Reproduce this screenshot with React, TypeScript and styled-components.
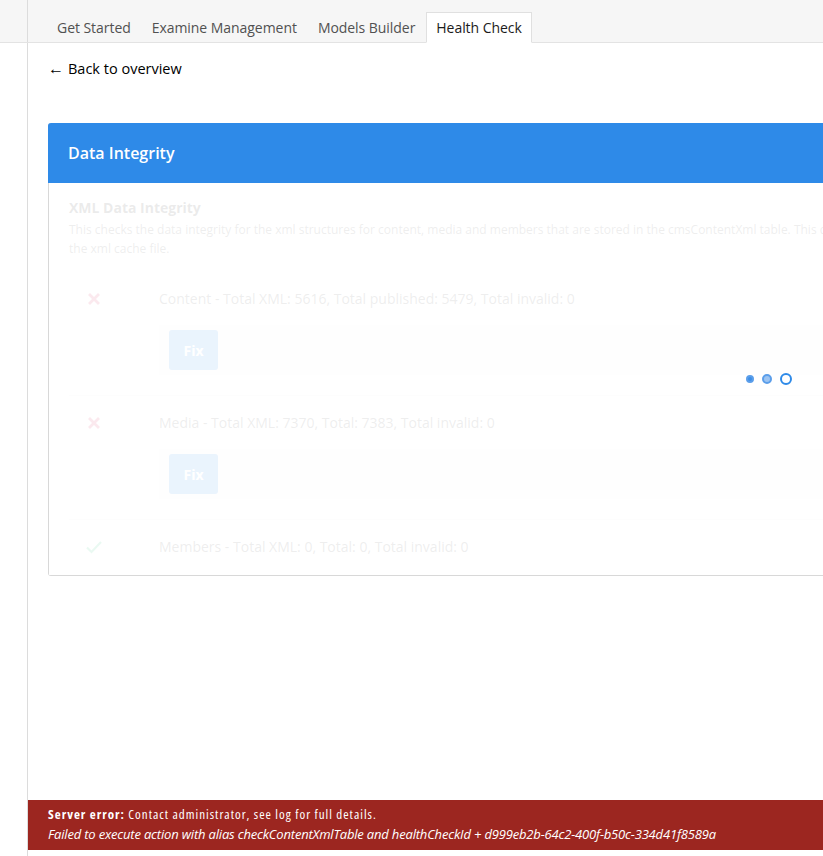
import styled, { createGlobalStyle } from "styled-components";

const GlobalStyle = createGlobalStyle`
    html, body {
        margin: 0;
        padding: 0;
        overflow: hidden;
        background: #fff;
        font-family: "Open Sans", "Noto Sans", sans-serif;
        color: #1b1b1b;
    }
`

const Page = styled.div`
    display: flex;
    flex-direction: column;
    height: 100vh;
    width: 100vw;
`

const Header = styled.div`
    display: flex;
    height: 43px;
    flex-shrink: 0;
    background: #f6f6f6;
    border-bottom: 1px solid #e3e3e3;
    box-sizing: border-box;
`

const SideStrip = styled.div`
    width: 28px;
    flex-shrink: 0;
    border-right: 1px solid #dcdcdc;
    box-sizing: border-box;
`

const Tabs = styled.div`
    display: flex;
    align-items: flex-end;
    padding-left: 19px;
`

const Tab = styled.div<{ $active?: boolean }>`
    height: 31px;
    margin-bottom: -1px;
    padding: 0 9px;
    margin-right: 1px;
    display: flex;
    align-items: center;
    font-size: 14px;
    letter-spacing: -0.05px;
    color: ${props => props.$active ? '#1b1b1b' : '#515151'};
    background: ${props => props.$active ? '#fff' : 'transparent'};
    border: 1px solid ${props => props.$active ? '#e0e0e0' : 'transparent'};
    border-bottom-color: ${props => props.$active ? '#fff' : 'transparent'};
    box-sizing: border-box;
`

const Body = styled.div`
    flex: 1;
    display: flex;
    min-height: 0;
`

const Main = styled.div`
    flex: 1;
    display: flex;
    flex-direction: column;
    min-width: 0;
    padding-bottom: 6px;
`

const Content = styled.div`
    flex: 1;
    padding: 14px 0 0 20px;
`

const BackLink = styled.a`
    display: flex;
    align-items: center;
    gap: 4px;
    height: 22px;
    font-size: 14.5px;
    color: #000;
    text-decoration: none;
    cursor: pointer;
`

const Arrow = styled.span`
    font-size: 16px;
    line-height: 16px;
`

const Card = styled.div`
    margin-top: 44px;
    width: 1436px;
    border: 1px solid #d8d8d8;
    border-top: none;
    border-radius: 3px;
`

const CardHeader = styled.div`
    background: #2e8ae8;
    height: 60px;
    padding: 0 20px;
    display: flex;
    align-items: center;
    color: #fff;
    font-size: 16px;
    font-weight: 600;
    margin: 0 -1px;
    border-radius: 3px 3px 0 0;
`

const CardBody = styled.div`
    position: relative;
    padding: 15px 20px 0;
`

const CheckTitle = styled.div`
    font-size: 14px;
    font-weight: 700;
    line-height: 20px;
    color: #343434;
`

const Description = styled.div`
    margin-top: 2px;
    font-size: 12px;
    line-height: 19px;
    color: #515151;
    white-space: pre-line;
    margin-bottom: 14px;
`

const Row = styled.div<{ $last?: boolean }>`
    display: flex;
    padding: 17px 0 ${props => props.$last ? '18px' : '20px'};
    border-bottom: ${props => props.$last ? 'none' : '1px solid #e9e9e9'};
`

const IconCell = styled.div`
    width: 50px;
    margin-right: 40px;
    height: 20px;
    display: flex;
    align-items: center;
    justify-content: center;
`

const RowMain = styled.div`
    flex: 1;
`

const RowText = styled.div`
    font-size: 14px;
    line-height: 20px;
    color: #515151;
`

const ActionBox = styled.div`
    margin-top: 16px;
    padding: 5px 10px;
    background: #f3f3f3;
`

const FixButton = styled.button`
    height: 40px;
    width: 49px;
    border: none;
    border-radius: 3px;
    background: #2e8ae8;
    color: #fff;
    font-family: "Open Sans", sans-serif;
    font-size: 14px;
    font-weight: 700;
    cursor: pointer;
`

const Overlay = styled.div`
    position: absolute;
    inset: 0;
    background: rgba(255, 255, 255, 0.9);
    display: flex;
    align-items: center;
    justify-content: center;
    gap: 8px;
    padding-left: 4px;
`

const Dot = styled.span<{ $size: number; $fill: string; $ring: string }>`
    width: ${props => props.$size}px;
    height: ${props => props.$size}px;
    border-radius: 50%;
    box-sizing: border-box;
    background: ${props => props.$fill};
    border: 2px solid ${props => props.$ring};
`

const ErrorBar = styled.div`
    background: #9c2620;
    color: #fff;
    padding: 4px 20px 6px;
    font-family: "Open Sans", "DejaVu Sans Condensed", sans-serif;
    font-size: 13px;
    line-height: 20px;
`

const ErrorLine = styled.div<{ $italic?: boolean }>`
    font-style: ${props => props.$italic ? 'italic' : 'normal'};
    font-stretch: ${props => props.$italic ? '100%' : '75%'};
    letter-spacing: ${props => props.$italic ? '-0.18px' : '1px'};
    white-space: nowrap;
`

const CrossIcon = () => (
    <svg width="12" height="12" viewBox="0 0 12 12">
        <path d="M2 2 L10 10 M10 2 L2 10" stroke="#d42054" strokeWidth="2.8" strokeLinecap="square" />
    </svg>
)

const CheckIcon = () => (
    <svg width="18" height="16" viewBox="0 0 18 16">
        <path d="M2 8.5 L6.5 13 L16 3" stroke="#2bc37c" strokeWidth="2.2" fill="none" />
    </svg>
)

interface Check {
    ok: boolean,
    text: string,
    fixable: boolean,
}

const checks: Check[] = [
    { ok: false, text: 'Content - Total XML: 5616, Total published: 5479, Total invalid: 0', fixable: true },
    { ok: false, text: 'Media - Total XML: 7370, Total: 7383, Total invalid: 0', fixable: true },
    { ok: true, text: 'Members - Total XML: 0, Total: 0, Total invalid: 0', fixable: false },
]

const App = () => {
    return (
        <>
            <GlobalStyle />
            <Page>
                <Header>
                    <SideStrip />
                    <Tabs>
                        <Tab>Get Started</Tab>
                        <Tab>Examine Management</Tab>
                        <Tab>Models Builder</Tab>
                        <Tab $active>Health Check</Tab>
                    </Tabs>
                </Header>
                <Body>
                    <SideStrip />
                    <Main>
                        <Content>
                            <BackLink><Arrow>←</Arrow>Back to overview</BackLink>
                            <Card>
                                <CardHeader>Data Integrity</CardHeader>
                                <CardBody>
                                    <CheckTitle>XML Data Integrity</CheckTitle>
                                    <Description>
                                        {'This checks the data integrity for the xml structures for content, media and members that are stored in the cmsContentXml table. This does not check the data integrity of the xml cache file, only the xml structures stored in the database used to create\nthe xml cache file.'}
                                    </Description>
                                    {checks.map((check, i) => (
                                        <Row key={i} $last={i === checks.length - 1}>
                                            <IconCell>{check.ok ? <CheckIcon /> : <CrossIcon />}</IconCell>
                                            <RowMain>
                                                <RowText>{check.text}</RowText>
                                                {check.fixable && <ActionBox>
                                                    <FixButton>Fix</FixButton>
                                                </ActionBox>}
                                            </RowMain>
                                        </Row>
                                    ))}
                                    <Overlay>
                                        <Dot $size={8} $fill="#3d8ee6" $ring="#5b9eea" />
                                        <Dot $size={10} $fill="#9cc4f2" $ring="#5b9eea" />
                                        <Dot $size={12} $fill="#fff" $ring="#2e8ae8" />
                                    </Overlay>
                                </CardBody>
                            </Card>
                        </Content>
                        <ErrorBar>
                            <ErrorLine><b>Server error:</b> Contact administrator, see log for full details.</ErrorLine>
                            <ErrorLine $italic>Failed to execute action with alias checkContentXmlTable and healthCheckId + d999eb2b-64c2-400f-b50c-334d41f8589a</ErrorLine>
                        </ErrorBar>
                    </Main>
                </Body>
            </Page>
        </>
    )
}

export default App;
